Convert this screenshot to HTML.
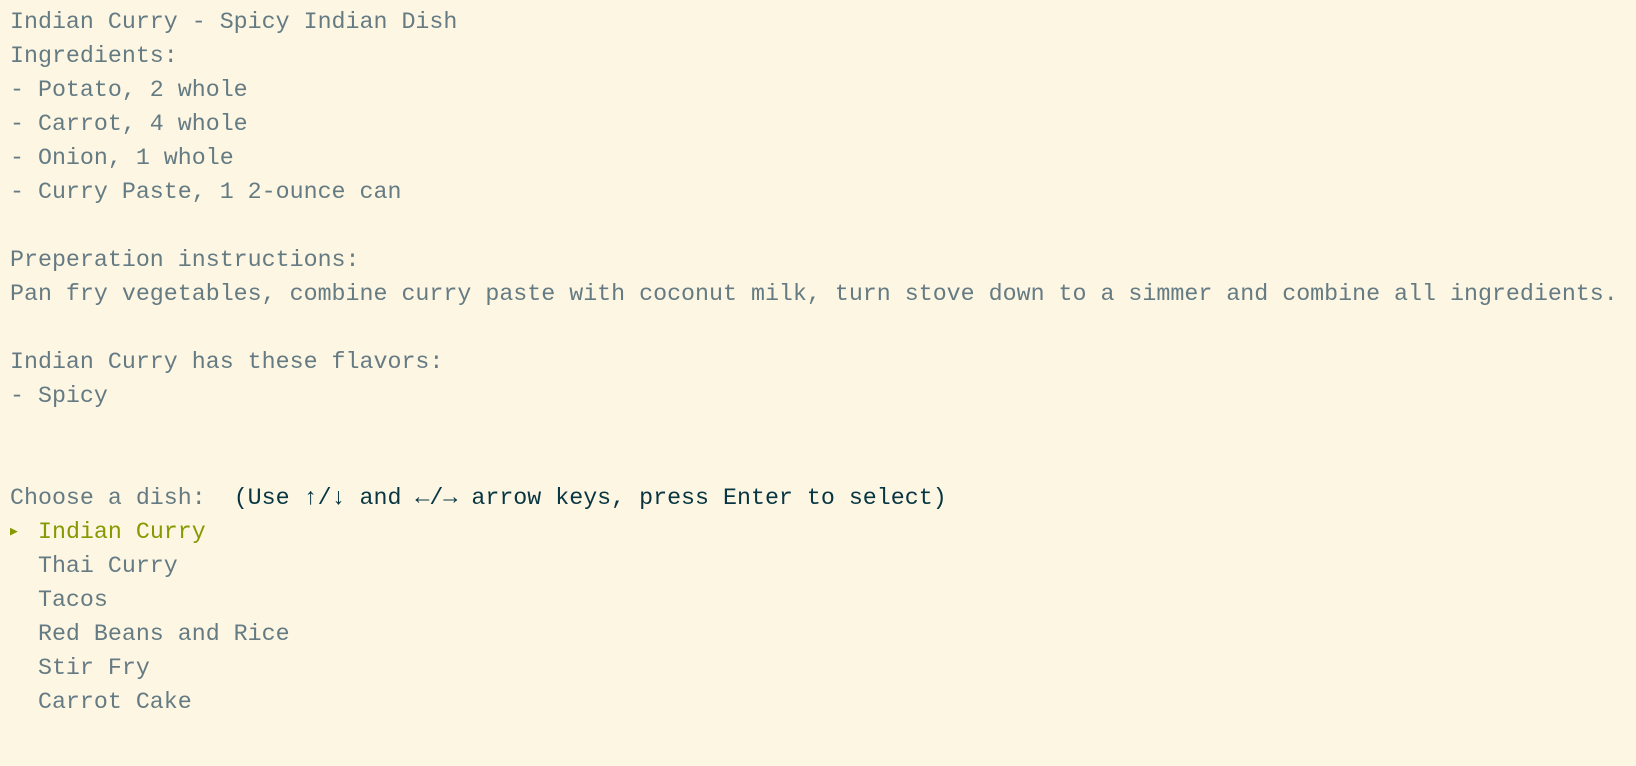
<!DOCTYPE html>
<html><head><meta charset="utf-8"><style>
html,body{margin:0;padding:0;background:#fdf6e3;width:1636px;height:766px;overflow:hidden}
pre{margin:0;padding:5px 0 0 10px;font-family:"Liberation Mono","DejaVu Sans Mono",monospace;font-size:23.3px;line-height:34px;color:#657b83;white-space:pre}
.d{color:#073642}.g{color:#859900}
.a{display:inline-block;width:14px;font-size:13px;line-height:10px;vertical-align:middle;text-align:left}
</style></head><body><pre>Indian Curry - Spicy Indian Dish
Ingredients:
- Potato, 2 whole
- Carrot, 4 whole
- Onion, 1 whole
- Curry Paste, 1 2-ounce can

Preperation instructions:
Pan fry vegetables, combine curry paste with coconut milk, turn stove down to a simmer and combine all ingredients.

Indian Curry has these flavors:
- Spicy


Choose a dish:  <span class="d">(Use ↑/↓ and ←/→ arrow keys, press Enter to select)</span>
<span class="g"><span class="a">▶</span> Indian Curry</span>
  Thai Curry
  Tacos
  Red Beans and Rice
  Stir Fry
  Carrot Cake</pre></body></html>
